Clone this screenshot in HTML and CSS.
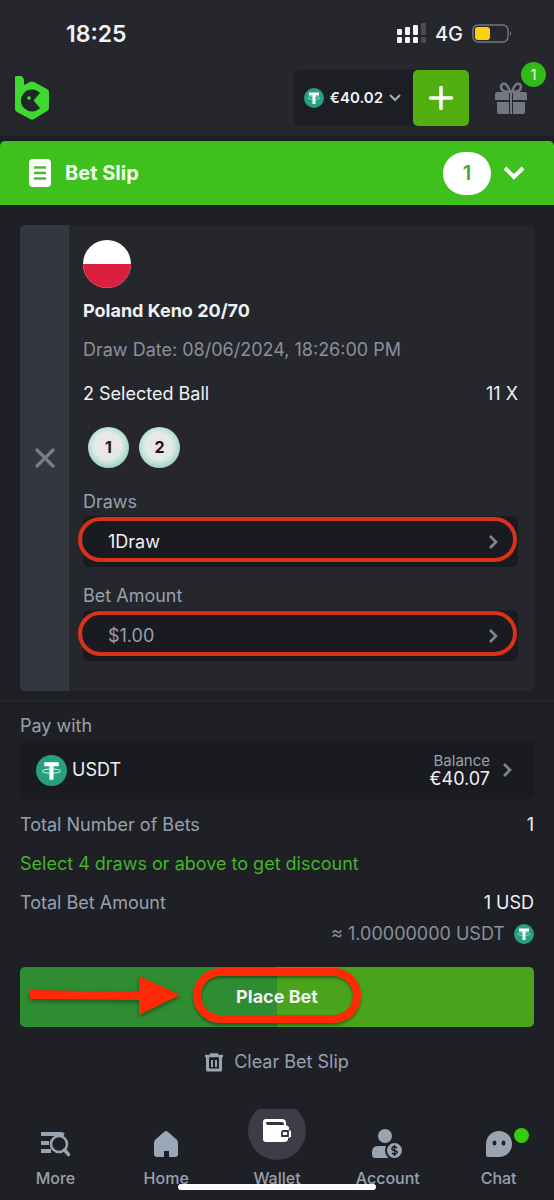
FILE: index.html
```html
<!DOCTYPE html>
<html lang="en">
<head>
<meta charset="utf-8">
<meta name="viewport" content="width=device-width, initial-scale=1">
<title>Bet Slip</title>
<link rel="stylesheet" href="styles.css">
</head>
<body>
<svg class="defs" aria-hidden="true">
  <symbol id="tether" viewBox="0 0 30 30">
    <circle cx="15" cy="15" r="15" fill="#26a17b"/>
    <path d="M8 7h14v4h-5v13h-4V11H8z" fill="#fff"/>
    <ellipse cx="15" cy="15.500" rx="8.500" ry="2" fill="none" stroke="#d5efe6" stroke-width="1"/>
  </symbol>
  <symbol id="tether-small" viewBox="0 0 20 20">
    <circle cx="10" cy="10" r="10" fill="#26a17b"/>
    <ellipse cx="10" cy="10" rx="6" ry="1.500" fill="none" stroke="#8ccfb9" stroke-width="1"/>
    <path d="M5 4.500h10v3h-3.500V16h-3V7.500H5z" fill="#fff"/>
  </symbol>
  <symbol id="chevron" viewBox="0 0 10 16">
    <path d="M2 2l6 6-6 6" fill="none" stroke="currentColor" stroke-width="2.600"/>
  </symbol>
</svg>

<div class="status">
  <time class="clock">18:25</time>
  <div class="signals">
    <svg width="29" height="21" viewBox="0 0 29 21" fill="#f4f4f6">
      <rect x="0" y="6" width="5" height="6" rx="1"/><rect x="0" y="14" width="5" height="6" rx="1"/>
      <rect x="8" y="4" width="5" height="8" rx="1"/><rect x="8" y="14" width="5" height="6" rx="1"/>
      <rect x="16" y="2" width="5" height="10" rx="1"/><rect x="16" y="14" width="5" height="6" rx="1"/>
      <g fill="#4b4c53"><rect x="24" y="0" width="5" height="12" rx="1"/><rect x="24" y="14" width="5" height="6" rx="1"/></g>
    </svg>
    <span class="network">4G</span>
    <svg width="40" height="19" viewBox="0 0 40 19">
      <rect x="1" y="1" width="35" height="17" rx="5" fill="none" stroke="#74757b" stroke-width="1.500"/>
      <rect x="3" y="3" width="15" height="13" rx="3" fill="#fdd00d"/>
      <path d="M38 7q2 2.500 0 5z" fill="#8a8b90"/>
    </svg>
  </div>
</div>

<header class="header">
  <a class="brand" href="#" aria-label="BC home">
    <svg width="34" height="44" viewBox="0 0 34 44">
      <path d="M0 1Q0 0 2 0H6Q9 1 9 5V9L15 6Q17 5 19 6L32 13Q34 14 34 16V32Q34 34 32 35L19 43Q17 44 15 43L2 36Q0 35 0 33Z" fill="#3fda2f"/>
      <path d="M25 17L18.500 24.500 25 32A11 11 0 1 1 25 17Z" fill="#1f2826"/>
      <circle cx="14" cy="22" r="1.800" fill="#52d943"/>
    </svg>
  </a>
  <div class="funds">
    <button class="currency" type="button">
      <svg width="20" height="20"><use href="#tether-small"/></svg>
      <span>€40.02</span>
      <svg width="12" height="8" viewBox="0 0 12 8"><path d="M1 1l5 5 5-5" fill="none" stroke="#a4abb6" stroke-width="2.200"/></svg>
    </button>
    <button class="deposit" type="button" aria-label="Deposit">
      <svg width="24" height="24" viewBox="0 0 24 24"><path d="M12 1.500v21M1.500 12h21" stroke="#fff" stroke-width="3.500" stroke-linecap="round"/></svg>
    </button>
  </div>
  <button class="gift" type="button" aria-label="Rewards">
    <svg width="32" height="32" viewBox="0 0 32 32">
      <path d="M15 10C9 10 6 8 6 5C6 2 9 1 11 2.500C13 4 14 7 15 10ZM17 10C23 10 26 8 26 5C26 2 23 1 21 2.500C19 4 18 7 17 10Z" fill="none" stroke="#737780" stroke-width="2.600"/>
      <path d="M2 10h12v8H0v-6q0-2 2-2zM18 10h12q2 0 2 2v6H18zM2 20h12v12H4q-2 0-2-2zM18 20h12v10q0 2-2 2H18zM15 10h2v22h-2z" fill="#737780"/>
    </svg>
    <span class="gift-count">1</span>
  </button>
</header>

<button class="slip-bar" type="button">
  <svg width="22" height="28" viewBox="0 0 22 28"><rect width="22" height="28" rx="4" fill="#fff"/><path d="M5 8.500h12M5 14h12M5 19.500h12" stroke="#4fb637" stroke-width="2.600"/></svg>
  <span class="slip-title">Bet Slip</span>
  <span class="slip-count">1</span>
  <svg width="22" height="14" viewBox="0 0 22 14"><path d="M2 2l9 9 9-9" fill="none" stroke="#fff" stroke-width="4"/></svg>
</button>

<main class="slip">
  <section class="card">
    <button class="remove" type="button" aria-label="Remove bet">
      <svg width="20" height="20" viewBox="0 0 20 20"><path d="M2 2l16 16M18 2L2 18" stroke="#7a7d87" stroke-width="3.200" stroke-linecap="round"/></svg>
    </button>
    <div class="bet">
      <svg width="48" height="48" viewBox="0 0 48 48" role="img" aria-label="Poland"><circle cx="24" cy="24" r="24" fill="#fff"/><path d="M0 24h48a24 24 0 0 1-48 0z" fill="#dc1f3f"/></svg>
      <h1 class="game">Poland Keno 20/70</h1>
      <p class="date">Draw Date: 08/06/2024, 18:26:00 PM</p>
      <div class="row picks"><span>2 Selected Ball</span><span>11 X</span></div>
      <div class="balls"><span class="ball">1</span><span class="ball">2</span></div>
      <label class="label" for="draws">Draws</label>
      <div class="field">
        <select id="draws" class="control"><option>1Draw</option></select>
        <svg class="chevron" width="10" height="16"><use href="#chevron"/></svg>
        <span class="ring"></span>
      </div>
      <label class="label" for="amount">Bet Amount</label>
      <div class="field">
        <input id="amount" class="control muted" type="text" value="$1.00">
        <svg class="chevron" width="10" height="16"><use href="#chevron"/></svg>
        <span class="ring"></span>
      </div>
    </div>
  </section>

  <section class="payment">
    <label class="pay-label" for="pay">Pay with</label>
    <button id="pay" class="pay" type="button">
      <svg width="31" height="31"><use href="#tether"/></svg>
      <span class="coin">USDT</span>
      <span class="balance"><span class="balance-label">Balance</span><span>€40.07</span></span>
      <svg class="chevron" width="10" height="16"><use href="#chevron"/></svg>
    </button>
    <div class="row total"><span class="muted">Total Number of Bets</span><span>1</span></div>
    <p class="promo">Select 4 draws or above to get discount</p>
    <div class="row total"><span class="muted">Total Bet Amount</span><span>1 USD</span></div>
    <div class="converted"><span>≈ 1.00000000 USDT</span><svg width="20" height="20"><use href="#tether-small"/></svg></div>
    <button class="place" type="button">
      <svg class="arrow" width="152" height="44" viewBox="0 0 152 44"><path d="M1 16L110 18V2L151 21 110 41V26L1 25Z" fill="#ff2a05"/></svg>
      <span class="place-text">Place Bet<span class="place-ring"></span></span>
    </button>
    <button class="clear" type="button">
      <svg width="18" height="19" viewBox="0 0 18 19" fill="none" stroke="#99a4b0"><path d="M0 3h18M5 1.500h8" stroke-width="2.600"/><path d="M2.500 4v13h13V4" stroke-width="3" stroke-linejoin="round"/><path d="M7 7v7M11 7v7" stroke-width="2"/></svg>
      <span>Clear Bet Slip</span>
    </button>
  </section>
</main>

<nav class="tabs">
  <a class="tab" href="#">
    <span class="tab-icon"><svg width="30" height="26" viewBox="0 0 30 26" fill="none" stroke="#99a4b0"><path d="M1 3h20l3 1M1 12h8M1 20h10" stroke-width="4"/><circle cx="19" cy="13" r="8" fill="#1e2026" stroke-width="2.600"/><path d="M24.500 19l4 4.500" stroke-width="3.600" stroke-linecap="round"/></svg></span>
    <span>More</span>
  </a>
  <a class="tab" href="#">
    <span class="tab-icon"><svg width="24" height="26" viewBox="0 0 24 26"><path d="M10 1Q12-1 14 1L22 8Q24 9 24 12V23Q24 26 21 26H15V20H10V26H3Q0 26 0 23V12Q0 9 2 8Z" fill="#99a9b8"/></svg></span>
    <span>Home</span>
  </a>
  <a class="tab" href="#">
    <span class="tab-icon wallet"><svg width="58" height="52" viewBox="0 0 58 52"><path d="M10 0H48A29 29 0 1 1 10 0Z" fill="#3c3d47"/><path d="M18 10H34Q38 10 38 14V16L41 18V21L43 22V28L40 29V31Q39 33 36 33H18Q15 33 15 30V13Q15 10 18 10Z" fill="#fff"/><path d="M18 13h16q2 0 2 3H20q-2 0-2-3z" fill="#33343d"/><path d="M35 22h5v5h-6v-4z" fill="#fff" stroke="#33343d" stroke-width="1.800"/></svg></span>
    <span>Wallet</span>
  </a>
  <a class="tab" href="#">
    <span class="tab-icon"><svg width="31" height="30" viewBox="0 0 31 30"><circle cx="13" cy="7" r="7" fill="#99a4b0"/><path d="M6 17H18V29H3Q0 29 0 25V23Q0 17 6 17Z" fill="#99a4b0"/><circle cx="22.500" cy="21.500" r="8.500" fill="#99a4b0" stroke="#1e2026" stroke-width="2"/><path d="M25 19Q22.500 16.500 20.500 18.500T22.500 21.500 24.500 24.500 20 24M22.500 16v11" fill="none" stroke="#1e2026" stroke-width="1.500"/></svg></span>
    <span>Account</span>
  </a>
  <a class="tab" href="#">
    <span class="tab-icon"><svg width="26" height="26" viewBox="0 0 26 26"><path d="M0 13A13 13 0 1 1 13 26H2Q0 26 0 24Z" fill="#99a4b0"/><ellipse cx="8.500" cy="12" rx="2" ry="2.600" fill="#1e2026"/><ellipse cx="17.500" cy="12" rx="2" ry="2.600" fill="#1e2026"/></svg><span class="online"></span></span>
    <span>Chat</span>
  </a>
  <span class="home-indicator"></span>
</nav>
</body>
</html>
```
FILE: styles.css
```css
* { box-sizing: border-box; }

body {
  margin: 0;
  min-height: 100vh;
  display: flex;
  flex-direction: column;
  background: #1e2026;
  color: #f0f1f4;
  font: 18px/24px Inter, "Liberation Sans", sans-serif;
}

button, input, select {
  margin: 0;
  padding: 0;
  border: 0;
  background: none;
  color: inherit;
  font: inherit;
}

h1, p { margin: 0; }
a { color: inherit; text-decoration: none; }
svg { display: block; flex: none; }
.defs { position: absolute; width: 0; height: 0; }

.status {
  display: flex;
  justify-content: space-between;
  align-items: center;
  height: 69px;
  padding: 0 42px 2px 66px;
  background: #25272d;
}
.clock { font-size: 23px; font-weight: 600; }
.signals { display: flex; align-items: center; gap: 9px; }
.network { font-size: 20px; font-weight: 500; }

.header {
  display: flex;
  align-items: center;
  height: 72px;
  padding: 0 27px 10px 15px;
  border-bottom: 5px solid #1c1e24;
  background: #25272d;
}
.header .brand { flex: 1; }
.funds { display: flex; border-radius: 6px; background: #1d1e24; }
.currency {
  display: flex;
  align-items: center;
  gap: 6px;
  padding: 0 12px 0 10px;
  font-size: 15px;
  font-weight: 600;
}
.deposit {
  display: grid;
  place-items: center;
  width: 56px;
  height: 56px;
  border-radius: 5px;
  background: #51b010;
}
.gift { position: relative; margin-left: 26px; }
.gift-count {
  position: absolute;
  top: -20px;
  right: -19px;
  width: 25px;
  border-radius: 50%;
  background: #30bb16;
  font-size: 15px;
  line-height: 25px;
}

.slip-bar {
  display: flex;
  align-items: center;
  height: 64px;
  padding: 0 29px;
  border-radius: 5px 5px 0 0;
  background: #3ec11c;
  color: #f2fff0;
  text-align: left;
}
.slip-title { flex: 1; padding-left: 14px; font-size: 20px; font-weight: 700; }
.slip-count {
  width: 48px;
  margin-right: 12px;
  border-radius: 22px;
  background: #fff;
  color: #43a83a;
  font-size: 20px;
  font-weight: 600;
  line-height: 43px;
  text-align: center;
}

.slip { flex: 1; padding-top: 20px; }
.card {
  display: flex;
  margin: 0 20px;
  border-radius: 5px;
  overflow: hidden;
  background: #25272d;
}
.remove { display: grid; place-items: center; width: 49px; background: #343640; }
.bet { flex: 1; padding: 15px 16px 30px 14px; }
.game { margin-top: 11px; font-size: 18px; font-weight: 700; line-height: 24px; }
.date { margin-top: 15px; color: #8b909b; }
.row { display: flex; justify-content: space-between; }
.picks { margin-top: 20px; }
.balls { display: flex; gap: 10px; margin: 21px 0 22px 5px; }
.ball {
  width: 41px;
  border-radius: 50%;
  background: radial-gradient(circle at 48% 46%, #ece4e5 0 25%, #e3ebe8 42%, #c5e5da 55%, #a3cfc0 72%);
  color: #17181b;
  font-size: 16px;
  font-weight: 700;
  line-height: 41px;
  text-align: center;
}
.label, .pay-label { display: block; color: #98a0ad; }
.label { margin-bottom: 2px; }
.field {
  position: relative;
  display: flex;
  align-items: center;
  height: 51px;
  padding-right: 20px;
  border-radius: 6px;
  background: #1a1b20;
}
.field + .label { margin-top: 17px; }
.control { flex: 1; min-width: 0; height: 51px; padding-left: 25px; appearance: none; outline: 0; }
.chevron { color: #808690; }
.muted { color: #98a0ad; }
.ring {
  position: absolute;
  inset: 1px 1px 5px -5px;
  border: 4px solid #d8321a;
  border-radius: 24px;
  pointer-events: none;
}

.payment {
  display: flex;
  flex-direction: column;
  margin-top: 9px;
  padding: 12px 20px 0;
  border-top: 2px solid #25272e;
}
.pay {
  display: flex;
  align-items: center;
  height: 58px;
  margin-top: 3px;
  padding: 0 22px 0 16px;
  border-radius: 6px;
  background: #1a1b20;
}
.coin { flex: 1; padding-left: 5px; text-align: left; }
.balance { display: flex; flex-direction: column; margin-right: 12px; line-height: 18px; text-align: right; }
.balance-label { color: #98a0ad; font-size: 15px; line-height: 18px; }
.total { margin-top: 14px; }
.promo { margin-top: 15px; color: #43b526; }
.promo + .total { margin-top: 15px; }
.converted { display: flex; align-items: center; justify-content: flex-end; gap: 9px; margin-top: 7px; color: #8b909b; }
.place {
  position: relative;
  height: 60px;
  margin-top: 21px;
  border-radius: 5px;
  background: linear-gradient(90deg, #2e8d31 50%, #4aa41b 50%);
  font-weight: 700;
  text-align: center;
}
.arrow { position: absolute; top: 7px; left: 9px; filter: drop-shadow(0 2px 2px #0006); }
.place-text { position: relative; }
.place-ring {
  position: absolute;
  inset: -18px -43px -16px;
  border: 8px solid #ff2a05;
  border-radius: 28px;
  box-shadow: 0 2px 3px #0006, inset 0 2px 3px #0006;
}
.clear {
  display: flex;
  align-items: center;
  align-self: center;
  gap: 11px;
  margin-top: 23px;
  color: #98a0ad;
}

.tabs {
  position: relative;
  display: grid;
  grid-template-columns: repeat(5, 1fr);
  padding-bottom: 10px;
  background: #1e2026;
  color: #98a0ad;
  font-size: 16px;
  font-weight: 500;
  text-align: center;
}
.tab { display: flex; flex-direction: column; align-items: center; }
.tab-icon { position: relative; display: grid; place-items: center; height: 57px; padding-top: 12px; }
.wallet { padding: 0 0 6px; }
.online {
  position: absolute;
  top: 19px;
  right: -17px;
  width: 15px;
  height: 15px;
  border-radius: 50%;
  background: #35cb11;
}
.home-indicator {
  position: absolute;
  bottom: 10px;
  left: 50%;
  width: 198px;
  height: 6px;
  border-radius: 3px;
  background: #fff;
  transform: translateX(-50%);
}
```
